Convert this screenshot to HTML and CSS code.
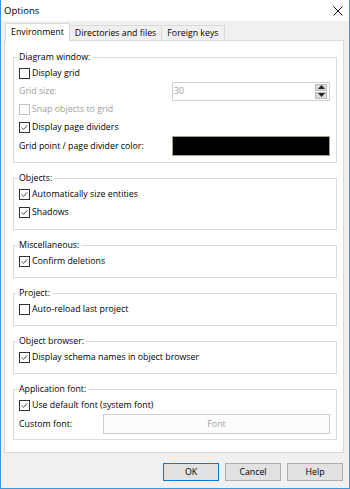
FILE: index.html
```html
<!DOCTYPE html>
<html lang="en">

<head>
    <meta charset="UTF-8">
    <meta name="viewport" content="width=device-width, initial-scale=1.0">
    <title>Options</title>
    <link rel="stylesheet" href="styles.css">
</head>

<body>
    <div class="window">
        <div class="titlebar">
            <span class="title">Options</span>
            <svg class="close" width="10" height="10" viewBox="0 0 10 10">
                <path d="M0.5 0.5 L9.5 9.5 M9.5 0.5 L0.5 9.5" stroke="#111" stroke-width="1" fill="none" />
            </svg>
        </div>
        <div class="dialog">
            <div class="tabs">
                <div class="tab active">Environment</div>
                <div class="tab">Directories and files</div>
                <div class="tab">Foreign keys</div>
            </div>
            <div class="panel">
                <fieldset class="group group-diagram">
                    <legend>Diagram window:</legend>
                    <div class="row"><span class="box"></span>Display grid</div>
                    <div class="row">
                        <span class="label disabled">Grid size:</span>
                        <span class="spin">
                            <span class="spin-value">30</span>
                            <span class="spin-buttons">
                                <span class="spin-btn"><svg width="7" height="4" viewBox="0 0 7 4"><path d="M3.5 0 L7 4 L0 4 Z" fill="#222" /></svg></span>
                                <span class="spin-btn"><svg width="7" height="4" viewBox="0 0 7 4"><path d="M0 0 L7 0 L3.5 4 Z" fill="#222" /></svg></span>
                            </span>
                        </span>
                    </div>
                    <div class="row disabled"><span class="box box-off"></span>Snap objects to grid</div>
                    <div class="row"><span class="box checked"></span>Display page dividers</div>
                    <div class="row row-tall">
                        <span class="label">Grid point / page divider color:</span>
                        <span class="swatch"></span>
                    </div>
                </fieldset>

                <fieldset class="group group-loose">
                    <legend>Objects:</legend>
                    <div class="row"><span class="box checked"></span>Automatically size entities</div>
                    <div class="row"><span class="box checked"></span>Shadows</div>
                </fieldset>

                <fieldset class="group">
                    <legend>Miscellaneous:</legend>
                    <div class="row"><span class="box checked"></span>Confirm deletions</div>
                </fieldset>

                <fieldset class="group">
                    <legend>Project:</legend>
                    <div class="row"><span class="box"></span>Auto-reload last project</div>
                </fieldset>

                <fieldset class="group">
                    <legend>Object browser:</legend>
                    <div class="row"><span class="box checked"></span>Display schema names in object browser</div>
                </fieldset>

                <fieldset class="group group-font">
                    <legend>Application font:</legend>
                    <div class="row"><span class="box checked"></span>Use default font (system font)</div>
                    <div class="row row-tall">
                        <span class="label label-short">Custom font:</span>
                        <button class="font-btn">Font</button>
                    </div>
                </fieldset>
            </div>
            <div class="buttons">
                <button class="btn default">OK</button>
                <button class="btn">Cancel</button>
                <button class="btn">Help</button>
            </div>
        </div>
    </div>

    <script>
        // draw the tick marks into the checked boxes
        document.querySelectorAll('.box.checked').forEach(box => {
            box.innerHTML = '<svg width="11" height="11" viewBox="0 0 11 11"><path d="M2 5.5 L4.3 7.8 L9 2.8" stroke="#333" stroke-width="1.1" fill="none"/></svg>'
        })
    </script>
</body>

</html>
```

FILE: styles.css
```css
* {
    margin: 0;
    padding: 0;
    box-sizing: border-box;
}

body {
    font-family: 'Open Sans', 'Noto Sans', sans-serif;
    font-size: 8.8px;
    color: #000;
    background: #fff;
}

.window {
    width: 350px;
    height: 489px;
    border: 1px solid #3d97e0;
    border-top: none;
    background: #f0f0f0;
}

.titlebar {
    height: 21px;
    background: #fff;
    display: flex;
    align-items: center;
    justify-content: space-between;
    padding: 0 6px 0 3px;
    font-size: 9.6px;
}

.dialog {
    padding: 2px 5px 0 3px;
}

.tabs {
    display: flex;
    align-items: flex-end;
    height: 17px;
    padding-left: 1px;
}

.tab {
    height: 15px;
    line-height: 14px;
    padding: 0 5px;
    border: 1px solid #d9d9d9;
    border-bottom: none;
    border-left: none;
    background: #f0f0f0;
}

.tab.active {
    height: 18px;
    margin-bottom: -1px;
    padding: 0 5px 0 5px;
    border-left: 1px solid #d9d9d9;
    background: #fff;
    position: relative;
    line-height: 16px;
}

.panel {
    height: 413px;
    background: #fff;
    border: 1px solid #d9d9d9;
    padding-top: 9px;
}

.group {
    border: 1px solid #dcdcdc;
    margin: 8px 6px 0 8px;
    padding: 0 5px 7px 5px;
    min-width: 0;
}

.group:first-child {
    margin-top: 0;
}

.group legend {
    line-height: 14px;
    padding: 0 2px;
    margin-left: -2px;
}

.group-diagram {
    padding-bottom: 6px;
}

.group-loose {
    padding-bottom: 8px;
}

.group-font {
    padding-bottom: 5px;
}

.row {
    display: flex;
    align-items: center;
    height: 18px;
}

.row-tall {
    height: 20px;
}

.disabled {
    color: #a0a0a0;
}

.label {
    width: 153px;
    flex-shrink: 0;
}

.label-short {
    width: 84px;
}

.box {
    width: 11px;
    height: 11px;
    border: 1px solid #333;
    background: #fff;
    margin-right: 2px;
    display: flex;
    align-items: center;
    justify-content: center;
}

.box svg {
    display: block;
}

.box-off {
    border-color: #c2c2c2;
}

.spin {
    flex: 1;
    margin-right: 1px;
    height: 19px;
    border: 1px solid #cfcfcf;
    display: flex;
    align-items: center;
    justify-content: space-between;
    padding: 0 2px 0 1px;
    color: #a0a0a0;
}

.spin-buttons {
    display: flex;
    flex-direction: column;
    gap: 1px;
}

.spin-btn {
    width: 12px;
    height: 7px;
    background: #dadada;
    border: 1px solid #bdbdbd;
    display: flex;
    align-items: center;
    justify-content: center;
}

.spin-btn svg {
    display: block;
}

.swatch {
    flex: 1;
    margin-right: 1px;
    height: 20px;
    background: #000;
    border: 1px solid #a3a08e;
}

.font-btn {
    flex: 1;
    margin-right: 1px;
    height: 20px;
    border: 1px solid #cccccc;
    background: #fcfcfc;
    color: #a0a0a0;
    font: inherit;
}

.buttons {
    display: flex;
    justify-content: flex-end;
    gap: 6px;
    margin-top: 10px;
    padding-right: 1px;
}

.btn {
    width: 56px;
    height: 18px;
    border: 1px solid #adadad;
    background: #e1e1e1;
    font: inherit;
    color: #000;
}

.btn.default {
    border-color: #0078d7;
}
```
